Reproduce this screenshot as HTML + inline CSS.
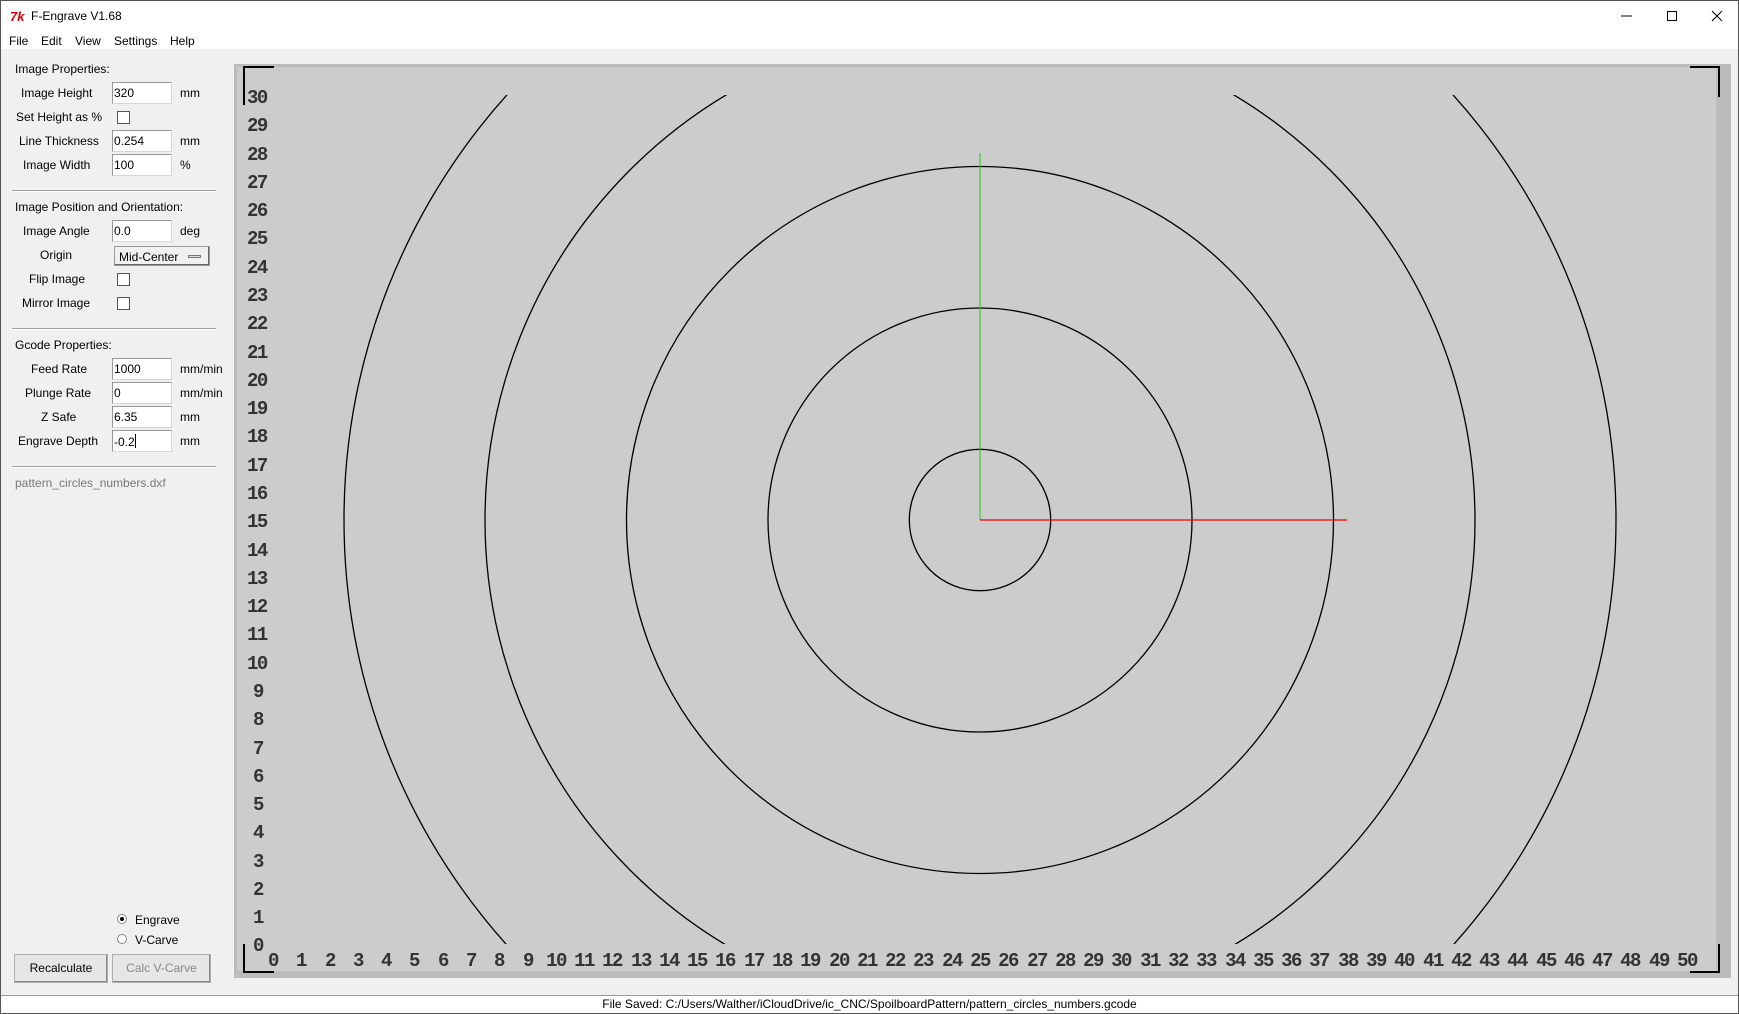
<!DOCTYPE html>
<html style="width:1739px;height:1014px;overflow:hidden"><head><meta charset="utf-8"><style>
*{margin:0;padding:0;box-sizing:border-box}
body{width:1739px;height:1014px;position:relative;overflow:hidden;background:#f0f0f0;font-family:"Liberation Sans",sans-serif;font-size:12px;color:#000;border:1px solid #555}
.a{position:absolute;white-space:nowrap}
.e{position:absolute;left:111px;width:60px;height:22px;background:#fff;border:1px solid #d8d8d8;border-top-color:#999;border-left-color:#999;padding:3px 1px;font-size:12px}
.c{position:absolute;left:116px;width:13px;height:13px;background:#fff;border:1px solid #555}
.sep{position:absolute;left:11px;width:204px;height:2px;border-top:1px solid #a0a0a0;border-bottom:1px solid #fff}
.btn{position:absolute;top:953px;height:29px;background:#e6e6e6;border:1px solid #adadad;box-shadow:inset -1px -1px 0 #888;text-align:center;line-height:27px}
</style></head><body>
<div class="a" style="left:0;top:0;width:1737px;height:48px;background:#fff"></div>
<div class="a" style="left:9px;top:8px;color:#d00;font-weight:bold;font-style:italic;font-size:13px">7k</div>
<div class="a" style="left:30px;top:8px;font-size:12px">F-Engrave V1.68</div>
<div class="a" style="left:8px;top:33px">File</div>
<div class="a" style="left:40px;top:33px">Edit</div>
<div class="a" style="left:74px;top:33px">View</div>
<div class="a" style="left:113px;top:33px">Settings</div>
<div class="a" style="left:169px;top:33px">Help</div>
<svg class="a" style="left:1600px;top:5px" width="130" height="22"><line x1="20" y1="10" x2="31" y2="10" stroke="#000"/><rect x="66.5" y="5.5" width="9" height="9" fill="none" stroke="#000"/><path d="M111 5L121 15M121 5L111 15" stroke="#000"/></svg>

<div class="a" style="left:14px;top:61px">Image Properties:</div>
<div class="a" style="left:20px;top:85px">Image Height</div><div class="e" style="top:81px">320</div><div class="a" style="left:179px;top:85px">mm</div>
<div class="a" style="left:15px;top:109px">Set Height as %</div><div class="c" style="top:110px"></div>
<div class="a" style="left:18px;top:133px">Line Thickness</div><div class="e" style="top:129px">0.254</div><div class="a" style="left:179px;top:133px">mm</div>
<div class="a" style="left:22px;top:157px">Image Width</div><div class="e" style="top:153px">100</div><div class="a" style="left:179px;top:157px">%</div>
<div class="sep" style="top:189px"></div>
<div class="a" style="left:14px;top:199px">Image Position and Orientation:</div>
<div class="a" style="left:22px;top:223px">Image Angle</div><div class="e" style="top:219px">0.0</div><div class="a" style="left:179px;top:223px">deg</div>
<div class="a" style="left:39px;top:247px">Origin</div>
<div class="a" style="left:113px;top:245px;width:96px;height:20px;background:#f0f0f0;border:1px solid #999;box-shadow:inset -1px -1px 0 #666;padding:3px 4px">Mid-Center<span style="position:absolute;left:73px;top:8px;width:13px;height:3px;border:1px solid #777;background:#ddd"></span></div>
<div class="a" style="left:28px;top:271px">Flip Image</div><div class="c" style="top:272px"></div>
<div class="a" style="left:21px;top:295px">Mirror Image</div><div class="c" style="top:296px"></div>
<div class="sep" style="top:327px"></div>
<div class="a" style="left:14px;top:337px">Gcode Properties:</div>
<div class="a" style="left:30px;top:361px">Feed Rate</div><div class="e" style="top:357px">1000</div><div class="a" style="left:179px;top:361px">mm/min</div>
<div class="a" style="left:24px;top:385px">Plunge Rate</div><div class="e" style="top:381px">0</div><div class="a" style="left:179px;top:385px">mm/min</div>
<div class="a" style="left:40px;top:409px">Z Safe</div><div class="e" style="top:405px">6.35</div><div class="a" style="left:179px;top:409px">mm</div>
<div class="a" style="left:17px;top:433px">Engrave Depth</div><div class="e" style="top:429px">-0.2<span style="display:inline-block;width:1px;height:14px;background:#000;vertical-align:-2px"></span></div><div class="a" style="left:179px;top:433px">mm</div>
<div class="sep" style="top:465px"></div>
<div class="a" style="left:14px;top:475px;color:#777">pattern_circles_numbers.dxf</div>
<div class="a" style="left:116px;top:913px;width:10px;height:10px;border-radius:50%;border:1px solid #888;background:#fff"><span style="position:absolute;left:2px;top:2px;width:4px;height:4px;border-radius:50%;background:#000"></span></div>
<div class="a" style="left:134px;top:912px">Engrave</div>
<div class="a" style="left:116px;top:933px;width:10px;height:10px;border-radius:50%;border:1px solid #888;background:#fff"></div>
<div class="a" style="left:134px;top:932px">V-Carve</div>
<div class="btn" style="left:13px;width:94px">Recalculate</div>
<div class="btn" style="left:111px;width:99px;color:#888">Calc V-Carve</div>

<svg class="a" style="left:0;top:0" width="1739" height="1014">
<rect x="233" y="63" width="1497" height="914" fill="#bcbcbc"/>
<rect x="236" y="66" width="1479" height="904" fill="#cccccc"/>
<path d="M243 104V66H273M1689 66H1718V96M243 943V971H273M1718 943V971H1689" stroke="#000" stroke-width="2" fill="none"/>
<defs><clipPath id="k"><rect x="236" y="94" width="1479" height="849"/></clipPath></defs>
<g fill="none" stroke="#000" stroke-width="1.3" clip-path="url(#k)">
<circle cx="979" cy="519" r="70.7"/><circle cx="979" cy="519" r="212"/><circle cx="979" cy="519" r="353.5"/><circle cx="979" cy="519" r="495"/><circle cx="979" cy="519" r="636"/>
</g>
<line x1="979" y1="519" x2="979" y2="152" stroke="#2c2" stroke-width="1"/>
<line x1="979" y1="519" x2="1346" y2="519" stroke="#e00" stroke-width="1.3"/>
<g font-family="Liberation Mono,monospace" font-weight="bold" font-size="19" fill="#333" letter-spacing="-1.5">
<text x="246" y="102">30</text><text x="246" y="130">29</text><text x="246" y="159">28</text><text x="246" y="187">27</text><text x="246" y="215">26</text><text x="246" y="243">25</text><text x="246" y="272">24</text><text x="246" y="300">23</text><text x="246" y="328">22</text><text x="246" y="357">21</text><text x="246" y="385">20</text><text x="246" y="413">19</text><text x="246" y="441">18</text><text x="246" y="470">17</text><text x="246" y="498">16</text><text x="246" y="526">15</text><text x="246" y="555">14</text><text x="246" y="583">13</text><text x="246" y="611">12</text><text x="246" y="639">11</text><text x="246" y="668">10</text><text x="252" y="696">9</text><text x="252" y="724">8</text><text x="252" y="753">7</text><text x="252" y="781">6</text><text x="252" y="809">5</text><text x="252" y="837">4</text><text x="252" y="866">3</text><text x="252" y="894">2</text><text x="252" y="922">1</text><text x="252" y="950">0</text>
</g>
<g font-family="Liberation Mono,monospace" font-weight="bold" font-size="19" fill="#333" letter-spacing="-1.5" text-anchor="middle">
<text x="272" y="965">0</text><text x="300" y="965">1</text><text x="329" y="965">2</text><text x="357" y="965">3</text><text x="385" y="965">4</text><text x="413" y="965">5</text><text x="442" y="965">6</text><text x="470" y="965">7</text><text x="498" y="965">8</text><text x="527" y="965">9</text><text x="555" y="965">10</text><text x="583" y="965">11</text><text x="611" y="965">12</text><text x="640" y="965">13</text><text x="668" y="965">14</text><text x="696" y="965">15</text><text x="724" y="965">16</text><text x="753" y="965">17</text><text x="781" y="965">18</text><text x="809" y="965">19</text><text x="838" y="965">20</text><text x="866" y="965">21</text><text x="894" y="965">22</text><text x="922" y="965">23</text><text x="951" y="965">24</text><text x="979" y="965">25</text><text x="1007" y="965">26</text><text x="1036" y="965">27</text><text x="1064" y="965">28</text><text x="1092" y="965">29</text><text x="1120" y="965">30</text><text x="1149" y="965">31</text><text x="1177" y="965">32</text><text x="1205" y="965">33</text><text x="1234" y="965">34</text><text x="1262" y="965">35</text><text x="1290" y="965">36</text><text x="1318" y="965">37</text><text x="1347" y="965">38</text><text x="1375" y="965">39</text><text x="1403" y="965">40</text><text x="1432" y="965">41</text><text x="1460" y="965">42</text><text x="1488" y="965">43</text><text x="1516" y="965">44</text><text x="1545" y="965">45</text><text x="1573" y="965">46</text><text x="1601" y="965">47</text><text x="1629" y="965">48</text><text x="1658" y="965">49</text><text x="1686" y="965">50</text>
</g>
</svg>
<div class="a" style="left:0;top:994px;width:1737px;height:18px;background:#fff;border-top:1px solid #999;text-align:center;line-height:17px">File Saved: C:/Users/Walther/iCloudDrive/ic_CNC/SpoilboardPattern/pattern_circles_numbers.gcode</div>
</body></html>
